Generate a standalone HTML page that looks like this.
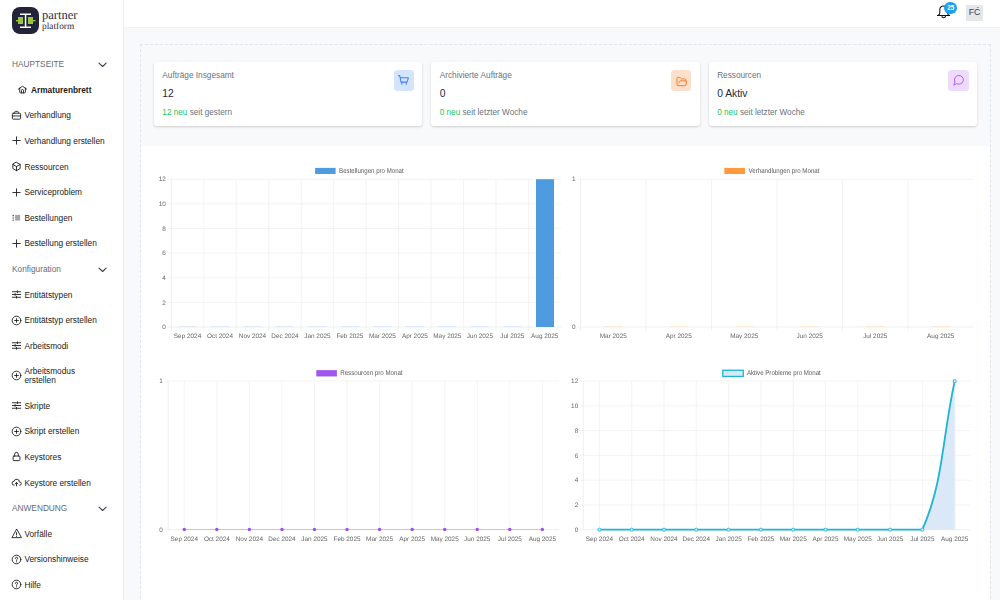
<!DOCTYPE html>
<html><head><meta charset="utf-8">
<style>
*{box-sizing:border-box;margin:0;padding:0}
html,body{width:1000px;height:600px;overflow:hidden;background:#fff;font-family:"Liberation Sans",sans-serif;color:#1f2937}
#sb{position:absolute;left:0;top:0;width:124px;height:600px;background:#fff;border-right:1px solid #e9eef4}
#hd{position:absolute;left:124px;top:0;width:876px;height:28px;background:#fff;border-bottom:1px solid #eef1f5}
#main{position:absolute;left:124px;top:28px;width:876px;height:572px;background:#f8f9fb}
#dash{position:absolute;left:140px;top:44px;width:851px;height:600px;border:1px dashed #dfe5ec}
.it{position:absolute;left:12px;font-size:8.3px;color:#222222;white-space:nowrap;line-height:10px}
.sec{position:absolute;left:12px;font-size:8.3px;color:#646b76;line-height:10px}
.chev{position:absolute;left:98px;width:9px;height:6px}
.ic{position:absolute;left:12px;width:9px;height:9px}
.card{position:absolute;top:62px;height:64px;background:#fff;border-radius:3px;box-shadow:0 1px 3px rgba(0,0,0,.12),0 1px 2px rgba(0,0,0,.06)}
.ct{position:absolute;left:8.6px;top:8.5px;font-size:8.25px;color:#6b7280;line-height:10px;white-space:nowrap}
.cv{position:absolute;left:8.6px;top:26.2px;font-size:10.3px;color:#1f2937;line-height:12px;white-space:nowrap}
.cs{position:absolute;left:8.6px;top:45.8px;font-size:8.2px;color:#6b7280;line-height:10px;white-space:nowrap}
.cs b{font-weight:normal;color:#22c55e}
.cib{position:absolute;top:8.2px;right:8.2px;width:20.5px;height:20.5px;border-radius:3.5px}
#charts{position:absolute;left:141px;top:146px;width:849px;height:454px;background:#fff}
svg text{font-family:"Liberation Sans",sans-serif;text-rendering:geometricPrecision}
</style></head><body>
<div id="sb">
  <svg style="position:absolute;left:0;top:0" width="124" height="40">
    <rect x="12" y="7" width="27" height="27" rx="8" fill="#23243a"/>
    <rect x="20" y="13.5" width="11" height="1.5" fill="#fff"/>
    <rect x="20" y="26.5" width="11" height="1.5" fill="#fff"/>
    <rect x="24.8" y="14" width="1.5" height="13" fill="#fff"/>
    <rect x="18" y="17" width="5" height="7" fill="#9cc43d"/>
    <rect x="28" y="17" width="5" height="7" fill="#9cc43d"/>
    <rect x="16" y="20" width="2" height="1.4" fill="#9cc43d"/>
    <rect x="33" y="20" width="2.5" height="1.4" fill="#9cc43d"/>
    <text x="42" y="19.2" font-family="Liberation Serif" font-size="12.5" fill="#2a2b40" style="font-family:'Liberation Serif',serif">partner</text>
    <text x="42" y="28.5" font-family="Liberation Serif" font-size="9.4" fill="#2a2b40" style="font-family:'Liberation Serif',serif">platform</text>
  </svg>
<div class="sec" style="top:59.12px">HAUPTSEITE</div>
<svg class="chev" style="top:62.10px" viewBox="0 0 9 6" fill="none" stroke="#3f4652" stroke-width="1.15" stroke-linecap="round" stroke-linejoin="round"><path d="M1 1.1L4.6 4.5L8.1 1.1"/></svg>
<svg class="ic" style="left:16.90px;top:84.40px;width:11.0px;height:11.0px" viewBox="0 0 24 24" fill="none" stroke="#222222" stroke-width="2.0" stroke-linecap="round" stroke-linejoin="round"><path d="M3 11.2L12 4.8l9 6.4"/><path d="M5.9 9v8.4a2 2 0 0 0 2 2h8.4a2 2 0 0 0 2-2V9"/><path d="M9.8 19.4V14a2.2 2.2 0 0 1 4.4 0v5.4"/></svg>
<div class="it" style="left:31px;top:84.82px;font-weight:bold">Armaturenbrett</div>
<svg class="ic" style="left:11.00px;top:109.80px;width:11.0px;height:11.0px" viewBox="0 0 24 24" fill="none" stroke="#222222" stroke-width="2.0" stroke-linecap="round" stroke-linejoin="round"><rect x="3" y="7" width="18" height="13" rx="2"/><path d="M8 7V5a2 2 0 0 1 2-2h4a2 2 0 0 1 2 2v2"/><path d="M3 13h18"/></svg>
<div class="it" style="left:24.4px;top:110.42px">Verhandlung</div>
<svg class="ic" style="left:11.00px;top:135.40px;width:11.0px;height:11.0px" viewBox="0 0 24 24" fill="none" stroke="#222222" stroke-width="2.0" stroke-linecap="round" stroke-linejoin="round"><path d="M12 4v16M4 12h16"/></svg>
<div class="it" style="left:24.4px;top:136.02px">Verhandlung erstellen</div>
<svg class="ic" style="left:11.00px;top:161.00px;width:11.0px;height:11.0px" viewBox="0 0 24 24" fill="none" stroke="#222222" stroke-width="2.0" stroke-linecap="round" stroke-linejoin="round"><path d="M12 3l8 4.5v9L12 21l-8-4.5v-9z"/><path d="M12 12l8-4.5M12 12v9M12 12L4 7.5"/></svg>
<div class="it" style="left:24.4px;top:161.62px">Ressourcen</div>
<svg class="ic" style="left:11.00px;top:186.60px;width:11.0px;height:11.0px" viewBox="0 0 24 24" fill="none" stroke="#222222" stroke-width="2.0" stroke-linecap="round" stroke-linejoin="round"><path d="M12 4v16M4 12h16"/></svg>
<div class="it" style="left:24.4px;top:187.22px">Serviceproblem</div>
<svg class="ic" style="left:11.00px;top:212.20px;width:11.0px;height:11.0px" viewBox="0 0 24 24" fill="none" stroke="#222222" stroke-width="2.0" stroke-linecap="round" stroke-linejoin="round"><rect x="8.9" y="6.2" width="11" height="12.5" fill="#a3a7ad" stroke="none"/><path d="M4.7 7.4v.6M4.7 12.6v.6M4.7 17.4v.6" stroke-width="2.6"/></svg>
<div class="it" style="left:24.4px;top:212.82px">Bestellungen</div>
<svg class="ic" style="left:11.00px;top:237.80px;width:11.0px;height:11.0px" viewBox="0 0 24 24" fill="none" stroke="#222222" stroke-width="2.0" stroke-linecap="round" stroke-linejoin="round"><path d="M12 4v16M4 12h16"/></svg>
<div class="it" style="left:24.4px;top:238.42px">Bestellung erstellen</div>
<div class="sec" style="top:264.02px">Konfiguration</div>
<svg class="chev" style="top:267.00px" viewBox="0 0 9 6" fill="none" stroke="#3f4652" stroke-width="1.15" stroke-linecap="round" stroke-linejoin="round"><path d="M1 1.1L4.6 4.5L8.1 1.1"/></svg>
<svg class="ic" style="left:11.00px;top:289.00px;width:11.0px;height:11.0px" viewBox="0 0 24 24" fill="none" stroke="#222222" stroke-width="2.0" stroke-linecap="round" stroke-linejoin="round"><path d="M3 6h18M3 12h18M3 18h18"/><path d="M14 4v4M9 10v4M12 16v4"/></svg>
<div class="it" style="left:24.4px;top:289.62px">Entitätstypen</div>
<svg class="ic" style="left:11.00px;top:314.60px;width:11.0px;height:11.0px" viewBox="0 0 24 24" fill="none" stroke="#222222" stroke-width="2.0" stroke-linecap="round" stroke-linejoin="round"><circle cx="12" cy="12" r="9.5"/><path d="M12 8v8M8 12h8"/></svg>
<div class="it" style="left:24.4px;top:315.22px">Entitätstyp erstellen</div>
<svg class="ic" style="left:11.00px;top:340.00px;width:11.0px;height:11.0px" viewBox="0 0 24 24" fill="none" stroke="#222222" stroke-width="2.0" stroke-linecap="round" stroke-linejoin="round"><path d="M3 6h18M3 12h18M3 18h18"/><path d="M14 4v4M9 10v4M12 16v4"/></svg>
<div class="it" style="left:24.4px;top:340.62px">Arbeitsmodi</div>
<svg class="ic" style="left:11.00px;top:369.80px;width:11.0px;height:11.0px" viewBox="0 0 24 24" fill="none" stroke="#222222" stroke-width="2.0" stroke-linecap="round" stroke-linejoin="round"><circle cx="12" cy="12" r="9.5"/><path d="M12 8v8M8 12h8"/></svg>
<div class="it" style="left:24.4px;top:367.02px;line-height:8.8px;padding-top:0">Arbeitsmodus<br>erstellen</div>
<svg class="ic" style="left:11.00px;top:400.20px;width:11.0px;height:11.0px" viewBox="0 0 24 24" fill="none" stroke="#222222" stroke-width="2.0" stroke-linecap="round" stroke-linejoin="round"><path d="M3 6h18M3 12h18M3 18h18"/><path d="M14 4v4M9 10v4M12 16v4"/></svg>
<div class="it" style="left:24.4px;top:400.82px">Skripte</div>
<svg class="ic" style="left:11.00px;top:425.80px;width:11.0px;height:11.0px" viewBox="0 0 24 24" fill="none" stroke="#222222" stroke-width="2.0" stroke-linecap="round" stroke-linejoin="round"><circle cx="12" cy="12" r="9.5"/><path d="M12 8v8M8 12h8"/></svg>
<div class="it" style="left:24.4px;top:426.42px">Skript erstellen</div>
<svg class="ic" style="left:11.00px;top:451.40px;width:11.0px;height:11.0px" viewBox="0 0 24 24" fill="none" stroke="#222222" stroke-width="2.0" stroke-linecap="round" stroke-linejoin="round"><rect x="4.5" y="11" width="15" height="10" rx="2"/><path d="M8 11V7a4 4 0 0 1 8 0v4"/></svg>
<div class="it" style="left:24.4px;top:452.02px">Keystores</div>
<svg class="ic" style="left:11.00px;top:477.00px;width:11.0px;height:11.0px" viewBox="0 0 24 24" fill="none" stroke="#222222" stroke-width="2.0" stroke-linecap="round" stroke-linejoin="round"><path d="M7 18a4.6 4.4 0 0 1 0-9 5 4.5 0 0 1 11 2h1a3.5 3.5 0 0 1 0 7"/><path d="M9 15l3-3 3 3M12 12v7.5"/></svg>
<div class="it" style="left:24.4px;top:477.62px">Keystore erstellen</div>
<div class="sec" style="top:503.22px">ANWENDUNG</div>
<svg class="chev" style="top:506.20px" viewBox="0 0 9 6" fill="none" stroke="#3f4652" stroke-width="1.15" stroke-linecap="round" stroke-linejoin="round"><path d="M1 1.1L4.6 4.5L8.1 1.1"/></svg>
<svg class="ic" style="left:11.00px;top:528.20px;width:11.0px;height:11.0px" viewBox="0 0 24 24" fill="none" stroke="#222222" stroke-width="2.0" stroke-linecap="round" stroke-linejoin="round"><path d="M12 3L2 21h20z"/><path d="M12 10v5M12 18v.5"/></svg>
<div class="it" style="left:24.4px;top:528.82px">Vorfälle</div>
<svg class="ic" style="left:11.00px;top:553.80px;width:11.0px;height:11.0px" viewBox="0 0 24 24" fill="none" stroke="#222222" stroke-width="2.0" stroke-linecap="round" stroke-linejoin="round"><circle cx="12" cy="12" r="9.5"/><path d="M9.5 9.5a2.5 2.5 0 1 1 3.5 2.3c-.6.3-1 .8-1 1.5v.7"/><path d="M12 17v.5"/></svg>
<div class="it" style="left:24.4px;top:554.42px">Versionshinweise</div>
<svg class="ic" style="left:11.00px;top:579.40px;width:11.0px;height:11.0px" viewBox="0 0 24 24" fill="none" stroke="#222222" stroke-width="2.0" stroke-linecap="round" stroke-linejoin="round"><circle cx="12" cy="12" r="9.5"/><path d="M9.5 9.5a2.5 2.5 0 1 1 3.5 2.3c-.6.3-1 .8-1 1.5v.7"/><path d="M12 17v.5"/></svg>
<div class="it" style="left:24.4px;top:580.02px">Hilfe</div>
</div>
<div id="hd"></div>
<svg style="position:absolute;left:0;top:0" width="1000" height="28" viewBox="0 0 1000 28" fill="none" stroke="#111111" stroke-width="1.05" stroke-linecap="round" stroke-linejoin="round">
<path d="M937.6 15.5H949.6"/>
<path d="M937.6 15.5C939.2 15 939.8 14.2 939.8 13V9.6C939.8 7.4 941.5 6 943.6 6C945.8 6 947.5 7.4 947.5 9.6V13C947.5 14.2 948 15 949.6 15.5"/>
<path d="M941.9 15.9A1.8 1.8 0 0 0 945.5 15.9"/>
</svg>
<div style="position:absolute;left:944.3px;top:1.6px;width:12.9px;height:12.6px;border-radius:50%;background:#1aa3e8;color:#fff;font-size:6.3px;font-weight:bold;text-align:center;line-height:12px">25</div>
<div style="position:absolute;left:966.2px;top:4.5px;width:16.6px;height:16.3px;background:#e5e7eb;color:#374151;font-size:8.8px;text-align:center;line-height:15.2px;letter-spacing:-0.2px">FĆ</div>

<div id="main"></div>
<div id="dash"></div>
<div class="card" style="left:153.75px;width:268.5px">
  <div class="ct">Aufträge Insgesamt</div>
  <div class="cv">12</div>
  <div class="cs"><b>12 neu</b> seit gestern</div>
  <div class="cib" style="background:#d4e4fd">
    <svg style="position:absolute;left:3.6px;top:4.2px" width="13" height="13" viewBox="0 0 24 24" fill="none" stroke="#3b82f6" stroke-width="1.9" stroke-linecap="round" stroke-linejoin="round"><path d="M3 3h2l2.5 12h11L21 7H6"/><path d="M9 15v4M17 15v4"/></svg>
  </div>
</div>
<div class="card" style="left:431.15px;width:268.5px">
  <div class="ct">Archivierte Aufträge</div>
  <div class="cv">0</div>
  <div class="cs"><b>0 neu</b> seit letzter Woche</div>
  <div class="cib" style="background:#fde0cb">
    <svg style="position:absolute;left:4.6px;top:5.4px" width="11.6" height="11.6" viewBox="0 0 24 24" fill="none" stroke="#f97316" stroke-width="1.9" stroke-linecap="round" stroke-linejoin="round"><path d="m6 14 1.5-2.9A2 2 0 0 1 9.24 10H20a2 2 0 0 1 1.94 2.5l-1.54 6a2 2 0 0 1-1.95 1.5H4a2 2 0 0 1-2-2V5a2 2 0 0 1 2-2h3.9a2 2 0 0 1 1.69.9l.81 1.2a2 2 0 0 0 1.67.9H18a2 2 0 0 1 2 2v2"/></svg>
  </div>
</div>
<div class="card" style="left:708.55px;width:268.5px">
  <div class="ct">Ressourcen</div>
  <div class="cv">0 Aktiv</div>
  <div class="cs"><b>0 neu</b> seit letzter Woche</div>
  <div class="cib" style="background:#eedafc">
    <svg style="position:absolute;left:4.9px;top:4.3px" width="11.8" height="11.8" viewBox="0 0 24 24" fill="none" stroke="#a855f7" stroke-width="1.9" stroke-linecap="round" stroke-linejoin="round"><path d="M7.9 20A9 9 0 1 0 4 16.1L2 22Z"/></svg>
  </div>
</div>

<div id="charts"></div>
<svg style="position:absolute;left:0;top:0;will-change:transform" width="1000" height="600" viewBox="0 0 1000 600"><line x1="167.50" y1="327.00" x2="561.00" y2="327.00" stroke="#e6e6e6" stroke-width="0.64"/><text x="165.80" y="329.30" text-anchor="end" fill="#666666" font-size="6.4">0</text><line x1="167.50" y1="302.37" x2="561.00" y2="302.37" stroke="#ececec" stroke-width="0.64"/><text x="165.80" y="304.67" text-anchor="end" fill="#666666" font-size="6.4">2</text><line x1="167.50" y1="277.73" x2="561.00" y2="277.73" stroke="#ececec" stroke-width="0.64"/><text x="165.80" y="280.03" text-anchor="end" fill="#666666" font-size="6.4">4</text><line x1="167.50" y1="253.10" x2="561.00" y2="253.10" stroke="#ececec" stroke-width="0.64"/><text x="165.80" y="255.40" text-anchor="end" fill="#666666" font-size="6.4">6</text><line x1="167.50" y1="228.47" x2="561.00" y2="228.47" stroke="#ececec" stroke-width="0.64"/><text x="165.80" y="230.77" text-anchor="end" fill="#666666" font-size="6.4">8</text><line x1="167.50" y1="203.83" x2="561.00" y2="203.83" stroke="#ececec" stroke-width="0.64"/><text x="165.80" y="206.13" text-anchor="end" fill="#666666" font-size="6.4">10</text><line x1="167.50" y1="179.20" x2="561.00" y2="179.20" stroke="#ececec" stroke-width="0.64"/><text x="165.80" y="180.80" text-anchor="end" fill="#666666" font-size="6.4">12</text><line x1="171.30" y1="179.20" x2="171.30" y2="331.00" stroke="#e6e6e6" stroke-width="0.64"/><line x1="203.78" y1="179.20" x2="203.78" y2="331.00" stroke="#ececec" stroke-width="0.64"/><line x1="236.25" y1="179.20" x2="236.25" y2="331.00" stroke="#ececec" stroke-width="0.64"/><line x1="268.73" y1="179.20" x2="268.73" y2="331.00" stroke="#ececec" stroke-width="0.64"/><line x1="301.20" y1="179.20" x2="301.20" y2="331.00" stroke="#ececec" stroke-width="0.64"/><line x1="333.68" y1="179.20" x2="333.68" y2="331.00" stroke="#ececec" stroke-width="0.64"/><line x1="366.15" y1="179.20" x2="366.15" y2="331.00" stroke="#ececec" stroke-width="0.64"/><line x1="398.62" y1="179.20" x2="398.62" y2="331.00" stroke="#ececec" stroke-width="0.64"/><line x1="431.10" y1="179.20" x2="431.10" y2="331.00" stroke="#ececec" stroke-width="0.64"/><line x1="463.58" y1="179.20" x2="463.58" y2="331.00" stroke="#ececec" stroke-width="0.64"/><line x1="496.05" y1="179.20" x2="496.05" y2="331.00" stroke="#ececec" stroke-width="0.64"/><line x1="528.53" y1="179.20" x2="528.53" y2="331.00" stroke="#ececec" stroke-width="0.64"/><text x="187.54" y="337.60" text-anchor="middle" fill="#666666" font-size="6.4">Sep 2024</text><line x1="178.54" y1="326.50" x2="196.54" y2="326.50" stroke="#d5e6f6" stroke-width="0.8"/><text x="220.01" y="337.60" text-anchor="middle" fill="#666666" font-size="6.4">Oct 2024</text><line x1="211.01" y1="326.50" x2="229.01" y2="326.50" stroke="#d5e6f6" stroke-width="0.8"/><text x="252.49" y="337.60" text-anchor="middle" fill="#666666" font-size="6.4">Nov 2024</text><line x1="243.49" y1="326.50" x2="261.49" y2="326.50" stroke="#d5e6f6" stroke-width="0.8"/><text x="284.96" y="337.60" text-anchor="middle" fill="#666666" font-size="6.4">Dec 2024</text><line x1="275.96" y1="326.50" x2="293.96" y2="326.50" stroke="#d5e6f6" stroke-width="0.8"/><text x="317.44" y="337.60" text-anchor="middle" fill="#666666" font-size="6.4">Jan 2025</text><line x1="308.44" y1="326.50" x2="326.44" y2="326.50" stroke="#d5e6f6" stroke-width="0.8"/><text x="349.91" y="337.60" text-anchor="middle" fill="#666666" font-size="6.4">Feb 2025</text><line x1="340.91" y1="326.50" x2="358.91" y2="326.50" stroke="#d5e6f6" stroke-width="0.8"/><text x="382.39" y="337.60" text-anchor="middle" fill="#666666" font-size="6.4">Mar 2025</text><line x1="373.39" y1="326.50" x2="391.39" y2="326.50" stroke="#d5e6f6" stroke-width="0.8"/><text x="414.86" y="337.60" text-anchor="middle" fill="#666666" font-size="6.4">Apr 2025</text><line x1="405.86" y1="326.50" x2="423.86" y2="326.50" stroke="#d5e6f6" stroke-width="0.8"/><text x="447.34" y="337.60" text-anchor="middle" fill="#666666" font-size="6.4">May 2025</text><line x1="438.34" y1="326.50" x2="456.34" y2="326.50" stroke="#d5e6f6" stroke-width="0.8"/><text x="479.81" y="337.60" text-anchor="middle" fill="#666666" font-size="6.4">Jun 2025</text><line x1="470.81" y1="326.50" x2="488.81" y2="326.50" stroke="#d5e6f6" stroke-width="0.8"/><text x="512.29" y="337.60" text-anchor="middle" fill="#666666" font-size="6.4">Jul 2025</text><line x1="503.29" y1="326.50" x2="521.29" y2="326.50" stroke="#d5e6f6" stroke-width="0.8"/><text x="544.76" y="337.60" text-anchor="middle" fill="#666666" font-size="6.4">Aug 2025</text><rect x="536" y="179.20" width="18" height="147.80" fill="#4e9bdf"/><rect x="315.10" y="167.90" width="20.50" height="6.10" fill="#4e9bdf"/><text x="339.10" y="172.60" text-anchor="start" fill="#5c5c5c" font-size="7.0" textLength="64.6" lengthAdjust="spacingAndGlyphs">Bestellungen pro Monat</text><line x1="577.00" y1="327.00" x2="973.50" y2="327.00" stroke="#e6e6e6" stroke-width="0.64"/><text x="575.50" y="329.30" text-anchor="end" fill="#666666" font-size="6.4">0</text><line x1="577.00" y1="179.30" x2="973.50" y2="179.30" stroke="#ececec" stroke-width="0.64"/><text x="575.50" y="181.10" text-anchor="end" fill="#666666" font-size="6.4">1</text><line x1="580.50" y1="179.30" x2="580.50" y2="331.00" stroke="#e6e6e6" stroke-width="0.64"/><line x1="646.00" y1="179.30" x2="646.00" y2="331.00" stroke="#ececec" stroke-width="0.64"/><line x1="711.50" y1="179.30" x2="711.50" y2="331.00" stroke="#ececec" stroke-width="0.64"/><line x1="777.00" y1="179.30" x2="777.00" y2="331.00" stroke="#ececec" stroke-width="0.64"/><line x1="842.50" y1="179.30" x2="842.50" y2="331.00" stroke="#ececec" stroke-width="0.64"/><line x1="908.00" y1="179.30" x2="908.00" y2="331.00" stroke="#ececec" stroke-width="0.64"/><text x="613.25" y="337.60" text-anchor="middle" fill="#666666" font-size="6.4">Mar 2025</text><line x1="604.25" y1="326.50" x2="622.25" y2="326.50" stroke="#fde3cc" stroke-width="0.8"/><text x="678.75" y="337.60" text-anchor="middle" fill="#666666" font-size="6.4">Apr 2025</text><line x1="669.75" y1="326.50" x2="687.75" y2="326.50" stroke="#fde3cc" stroke-width="0.8"/><text x="744.25" y="337.60" text-anchor="middle" fill="#666666" font-size="6.4">May 2025</text><line x1="735.25" y1="326.50" x2="753.25" y2="326.50" stroke="#fde3cc" stroke-width="0.8"/><text x="809.75" y="337.60" text-anchor="middle" fill="#666666" font-size="6.4">Jun 2025</text><line x1="800.75" y1="326.50" x2="818.75" y2="326.50" stroke="#fde3cc" stroke-width="0.8"/><text x="875.25" y="337.60" text-anchor="middle" fill="#666666" font-size="6.4">Jul 2025</text><line x1="866.25" y1="326.50" x2="884.25" y2="326.50" stroke="#fde3cc" stroke-width="0.8"/><text x="940.75" y="337.60" text-anchor="middle" fill="#666666" font-size="6.4">Aug 2025</text><line x1="931.75" y1="326.50" x2="949.75" y2="326.50" stroke="#fde3cc" stroke-width="0.8"/><rect x="724.35" y="167.90" width="20.60" height="6.10" fill="#ff9a3d"/><text x="748.50" y="172.60" text-anchor="start" fill="#5c5c5c" font-size="7.0" textLength="71.0" lengthAdjust="spacingAndGlyphs">Verhandlungen pro Monat</text><line x1="164.50" y1="529.50" x2="558.80" y2="529.50" stroke="#e6e6e6" stroke-width="0.64"/><text x="162.80" y="531.80" text-anchor="end" fill="#666666" font-size="6.4">0</text><line x1="164.50" y1="381.00" x2="558.80" y2="381.00" stroke="#ececec" stroke-width="0.64"/><text x="162.80" y="383.30" text-anchor="end" fill="#666666" font-size="6.4">1</text><line x1="168.20" y1="381.00" x2="168.20" y2="529.50" stroke="#e6e6e6" stroke-width="0.64"/><line x1="184.30" y1="381.00" x2="184.30" y2="529.50" stroke="#ececec" stroke-width="0.64"/><text x="184.30" y="540.60" text-anchor="middle" fill="#666666" font-size="6.4">Sep 2024</text><line x1="216.85" y1="381.00" x2="216.85" y2="529.50" stroke="#ececec" stroke-width="0.64"/><text x="216.85" y="540.60" text-anchor="middle" fill="#666666" font-size="6.4">Oct 2024</text><line x1="249.40" y1="381.00" x2="249.40" y2="529.50" stroke="#ececec" stroke-width="0.64"/><text x="249.40" y="540.60" text-anchor="middle" fill="#666666" font-size="6.4">Nov 2024</text><line x1="281.95" y1="381.00" x2="281.95" y2="529.50" stroke="#ececec" stroke-width="0.64"/><text x="281.95" y="540.60" text-anchor="middle" fill="#666666" font-size="6.4">Dec 2024</text><line x1="314.50" y1="381.00" x2="314.50" y2="529.50" stroke="#ececec" stroke-width="0.64"/><text x="314.50" y="540.60" text-anchor="middle" fill="#666666" font-size="6.4">Jan 2025</text><line x1="347.05" y1="381.00" x2="347.05" y2="529.50" stroke="#ececec" stroke-width="0.64"/><text x="347.05" y="540.60" text-anchor="middle" fill="#666666" font-size="6.4">Feb 2025</text><line x1="379.60" y1="381.00" x2="379.60" y2="529.50" stroke="#ececec" stroke-width="0.64"/><text x="379.60" y="540.60" text-anchor="middle" fill="#666666" font-size="6.4">Mar 2025</text><line x1="412.15" y1="381.00" x2="412.15" y2="529.50" stroke="#ececec" stroke-width="0.64"/><text x="412.15" y="540.60" text-anchor="middle" fill="#666666" font-size="6.4">Apr 2025</text><line x1="444.70" y1="381.00" x2="444.70" y2="529.50" stroke="#ececec" stroke-width="0.64"/><text x="444.70" y="540.60" text-anchor="middle" fill="#666666" font-size="6.4">May 2025</text><line x1="477.25" y1="381.00" x2="477.25" y2="529.50" stroke="#ececec" stroke-width="0.64"/><text x="477.25" y="540.60" text-anchor="middle" fill="#666666" font-size="6.4">Jun 2025</text><line x1="509.80" y1="381.00" x2="509.80" y2="529.50" stroke="#ececec" stroke-width="0.64"/><text x="509.80" y="540.60" text-anchor="middle" fill="#666666" font-size="6.4">Jul 2025</text><line x1="542.35" y1="381.00" x2="542.35" y2="529.50" stroke="#ececec" stroke-width="0.64"/><text x="542.35" y="540.60" text-anchor="middle" fill="#666666" font-size="6.4">Aug 2025</text><line x1="184.30" y1="529.50" x2="542.35" y2="529.50" stroke="#c9c9c9" stroke-width="1.2"/><circle cx="184.30" cy="529.50" r="1.7" fill="#9b4ff0"/><circle cx="216.85" cy="529.50" r="1.7" fill="#9b4ff0"/><circle cx="249.40" cy="529.50" r="1.7" fill="#9b4ff0"/><circle cx="281.95" cy="529.50" r="1.7" fill="#9b4ff0"/><circle cx="314.50" cy="529.50" r="1.7" fill="#9b4ff0"/><circle cx="347.05" cy="529.50" r="1.7" fill="#9b4ff0"/><circle cx="379.60" cy="529.50" r="1.7" fill="#9b4ff0"/><circle cx="412.15" cy="529.50" r="1.7" fill="#9b4ff0"/><circle cx="444.70" cy="529.50" r="1.7" fill="#9b4ff0"/><circle cx="477.25" cy="529.50" r="1.7" fill="#9b4ff0"/><circle cx="509.80" cy="529.50" r="1.7" fill="#9b4ff0"/><circle cx="542.35" cy="529.50" r="1.7" fill="#9b4ff0"/><rect x="316.30" y="370.15" width="20.60" height="6.30" fill="#9f55ee"/><text x="340.20" y="375.10" text-anchor="start" fill="#5c5c5c" font-size="7.0" textLength="62.4" lengthAdjust="spacingAndGlyphs">Ressourcen pro Monat</text><line x1="580.00" y1="529.70" x2="970.60" y2="529.70" stroke="#e6e6e6" stroke-width="0.64"/><text x="578.20" y="532.00" text-anchor="end" fill="#666666" font-size="6.4">0</text><line x1="580.00" y1="504.92" x2="970.60" y2="504.92" stroke="#ececec" stroke-width="0.64"/><text x="578.20" y="507.22" text-anchor="end" fill="#666666" font-size="6.4">2</text><line x1="580.00" y1="480.13" x2="970.60" y2="480.13" stroke="#ececec" stroke-width="0.64"/><text x="578.20" y="482.43" text-anchor="end" fill="#666666" font-size="6.4">4</text><line x1="580.00" y1="455.35" x2="970.60" y2="455.35" stroke="#ececec" stroke-width="0.64"/><text x="578.20" y="457.65" text-anchor="end" fill="#666666" font-size="6.4">6</text><line x1="580.00" y1="430.57" x2="970.60" y2="430.57" stroke="#ececec" stroke-width="0.64"/><text x="578.20" y="432.87" text-anchor="end" fill="#666666" font-size="6.4">8</text><line x1="580.00" y1="405.78" x2="970.60" y2="405.78" stroke="#ececec" stroke-width="0.64"/><text x="578.20" y="408.08" text-anchor="end" fill="#666666" font-size="6.4">10</text><line x1="580.00" y1="381.00" x2="970.60" y2="381.00" stroke="#ececec" stroke-width="0.64"/><text x="578.20" y="383.30" text-anchor="end" fill="#666666" font-size="6.4">12</text><line x1="583.30" y1="381.00" x2="583.30" y2="529.70" stroke="#e6e6e6" stroke-width="0.64"/><line x1="599.40" y1="381.00" x2="599.40" y2="529.70" stroke="#ececec" stroke-width="0.64"/><text x="599.40" y="540.60" text-anchor="middle" fill="#666666" font-size="6.4">Sep 2024</text><line x1="631.70" y1="381.00" x2="631.70" y2="529.70" stroke="#ececec" stroke-width="0.64"/><text x="631.70" y="540.60" text-anchor="middle" fill="#666666" font-size="6.4">Oct 2024</text><line x1="664.00" y1="381.00" x2="664.00" y2="529.70" stroke="#ececec" stroke-width="0.64"/><text x="664.00" y="540.60" text-anchor="middle" fill="#666666" font-size="6.4">Nov 2024</text><line x1="696.30" y1="381.00" x2="696.30" y2="529.70" stroke="#ececec" stroke-width="0.64"/><text x="696.30" y="540.60" text-anchor="middle" fill="#666666" font-size="6.4">Dec 2024</text><line x1="728.60" y1="381.00" x2="728.60" y2="529.70" stroke="#ececec" stroke-width="0.64"/><text x="728.60" y="540.60" text-anchor="middle" fill="#666666" font-size="6.4">Jan 2025</text><line x1="760.90" y1="381.00" x2="760.90" y2="529.70" stroke="#ececec" stroke-width="0.64"/><text x="760.90" y="540.60" text-anchor="middle" fill="#666666" font-size="6.4">Feb 2025</text><line x1="793.20" y1="381.00" x2="793.20" y2="529.70" stroke="#ececec" stroke-width="0.64"/><text x="793.20" y="540.60" text-anchor="middle" fill="#666666" font-size="6.4">Mar 2025</text><line x1="825.50" y1="381.00" x2="825.50" y2="529.70" stroke="#ececec" stroke-width="0.64"/><text x="825.50" y="540.60" text-anchor="middle" fill="#666666" font-size="6.4">Apr 2025</text><line x1="857.80" y1="381.00" x2="857.80" y2="529.70" stroke="#ececec" stroke-width="0.64"/><text x="857.80" y="540.60" text-anchor="middle" fill="#666666" font-size="6.4">May 2025</text><line x1="890.10" y1="381.00" x2="890.10" y2="529.70" stroke="#ececec" stroke-width="0.64"/><text x="890.10" y="540.60" text-anchor="middle" fill="#666666" font-size="6.4">Jun 2025</text><line x1="922.40" y1="381.00" x2="922.40" y2="529.70" stroke="#ececec" stroke-width="0.64"/><text x="922.40" y="540.60" text-anchor="middle" fill="#666666" font-size="6.4">Jul 2025</text><line x1="954.70" y1="381.00" x2="954.70" y2="529.70" stroke="#ececec" stroke-width="0.64"/><text x="954.70" y="540.60" text-anchor="middle" fill="#666666" font-size="6.4">Aug 2025</text><path d="M922.40 529.70 C943.72 480.63 941.78 440.48 954.70 381.00 L954.70 529.70Z" fill="#dbe8f7"/><path d="M599.40 529.70 L922.40 529.70 C943.72 480.63 941.78 440.48 954.70 381.00" fill="none" stroke="#1fb3d6" stroke-width="1.8"/><circle cx="599.40" cy="529.70" r="1.6" fill="#c8e9f3" stroke="#1fb3d6" stroke-width="0.8"/><circle cx="631.70" cy="529.70" r="1.6" fill="#c8e9f3" stroke="#1fb3d6" stroke-width="0.8"/><circle cx="664.00" cy="529.70" r="1.6" fill="#c8e9f3" stroke="#1fb3d6" stroke-width="0.8"/><circle cx="696.30" cy="529.70" r="1.6" fill="#c8e9f3" stroke="#1fb3d6" stroke-width="0.8"/><circle cx="728.60" cy="529.70" r="1.6" fill="#c8e9f3" stroke="#1fb3d6" stroke-width="0.8"/><circle cx="760.90" cy="529.70" r="1.6" fill="#c8e9f3" stroke="#1fb3d6" stroke-width="0.8"/><circle cx="793.20" cy="529.70" r="1.6" fill="#c8e9f3" stroke="#1fb3d6" stroke-width="0.8"/><circle cx="825.50" cy="529.70" r="1.6" fill="#c8e9f3" stroke="#1fb3d6" stroke-width="0.8"/><circle cx="857.80" cy="529.70" r="1.6" fill="#c8e9f3" stroke="#1fb3d6" stroke-width="0.8"/><circle cx="890.10" cy="529.70" r="1.6" fill="#c8e9f3" stroke="#1fb3d6" stroke-width="0.8"/><circle cx="922.40" cy="529.70" r="1.6" fill="#c8e9f3" stroke="#1fb3d6" stroke-width="0.8"/><circle cx="954.70" cy="381.00" r="1.6" fill="#c8e9f3" stroke="#1fb3d6" stroke-width="0.8"/><rect x="722.80" y="370.25" width="20.45" height="6.20" fill="#d9e8f6" stroke="#1fb3d6" stroke-width="1.3"/><text x="746.90" y="375.10" text-anchor="start" fill="#5c5c5c" font-size="7.0" textLength="73.9" lengthAdjust="spacingAndGlyphs">Aktive Probleme pro Monat</text></svg>
</body></html>
